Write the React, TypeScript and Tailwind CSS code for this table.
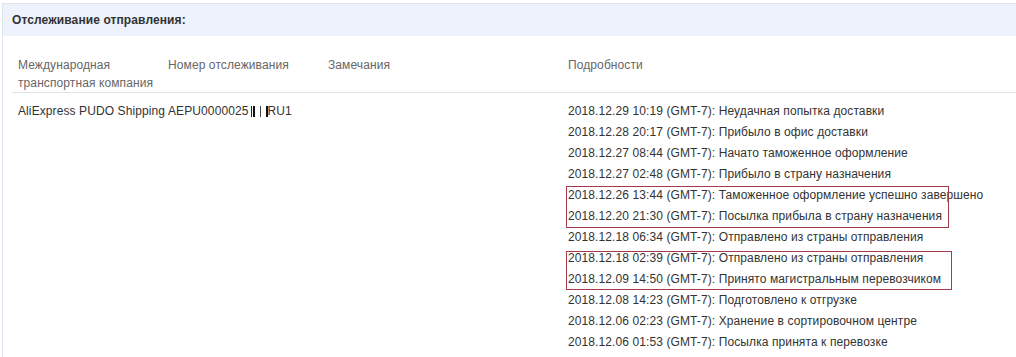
import React from 'react';

const events = [
  { date: '2018.12.29 10:19', text: 'Неудачная попытка доставки' },
  { date: '2018.12.28 20:17', text: 'Прибыло в офис доставки' },
  { date: '2018.12.27 08:44', text: 'Начато таможенное оформление' },
  { date: '2018.12.27 02:48', text: 'Прибыло в страну назначения' },
  { date: '2018.12.26 13:44', text: 'Таможенное оформление успешно завершено' },
  { date: '2018.12.20 21:30', text: 'Посылка прибыла в страну назначения' },
  { date: '2018.12.18 06:34', text: 'Отправлено из страны отправления' },
  { date: '2018.12.18 02:39', text: 'Отправлено из страны отправления' },
  { date: '2018.12.09 14:50', text: 'Принято магистральным перевозчиком' },
  { date: '2018.12.08 14:23', text: 'Подготовлено к отгрузке' },
  { date: '2018.12.06 02:23', text: 'Хранение в сортировочном центре' },
  { date: '2018.12.06 01:53', text: 'Посылка принята к перевозке' },
];

export default function App() {
  return (
    <div
      className="w-[1016px] h-[357px] overflow-hidden bg-white pt-[3px] pl-[2px] text-[12px] text-[#333] tracking-[0.1px]"
      style={{ fontFamily: '"Liberation Sans", Arial, sans-serif' }}
    >
      <div className="h-full border-l border-t border-[#dfe5ee]">
        {/* Header */}
        <div className="h-[32px] bg-[#edf2fc] pl-[9px] flex items-center">
          <h2 className="font-bold text-[12px] text-[#333] pb-[1px]">Отслеживание отправления:</h2>
        </div>

        {/* Table */}
        <div className="ml-[9px] pt-[20px]">
          <div className="flex border-b border-[#e3e3e3] text-[#666] leading-[18px]">
            <div className="w-[156px] pl-[6px]">
              Международная
              <br />
              транспортная компания
            </div>
            <div className="w-[160px]">Номер отслеживания</div>
            <div className="w-[240px]">Замечания</div>
            <div className="flex-1">Подробности</div>
          </div>

          <div className="flex pt-[8px] leading-[21px]">
            <div className="w-[156px] pl-[6px] whitespace-nowrap">AliExpress PUDO Shipping</div>
            <div className="w-[160px] whitespace-nowrap flex items-center h-[21px]">
              AEPU0000025
              <span className="inline-block w-[1px] h-[11px] bg-[#222] ml-[2px]" />
              <span className="inline-block w-[2px] h-[11px] bg-[#111] ml-[1px]" />
              <span className="inline-block w-[1px] h-[11px] bg-[#444] ml-[5px]" />
              <span className="inline-block w-[2px] h-[11px] bg-[#111] ml-[5px]" />
              RU1
            </div>
            <div className="w-[240px]" />
            <div className="flex-1 relative">
              {events.map((e, i) => (
                <div key={i} className="whitespace-nowrap">
                  {e.date} (GMT-7): {e.text}
                </div>
              ))}
              <div className="absolute left-[-2px] top-[85px] w-[383px] h-[42px] border border-[#a63a4a]" />
              <div className="absolute left-[-2px] top-[150px] w-[386px] h-[39px] border border-[#a63a4a]" />
            </div>
          </div>
        </div>
      </div>
    </div>
  );
}
